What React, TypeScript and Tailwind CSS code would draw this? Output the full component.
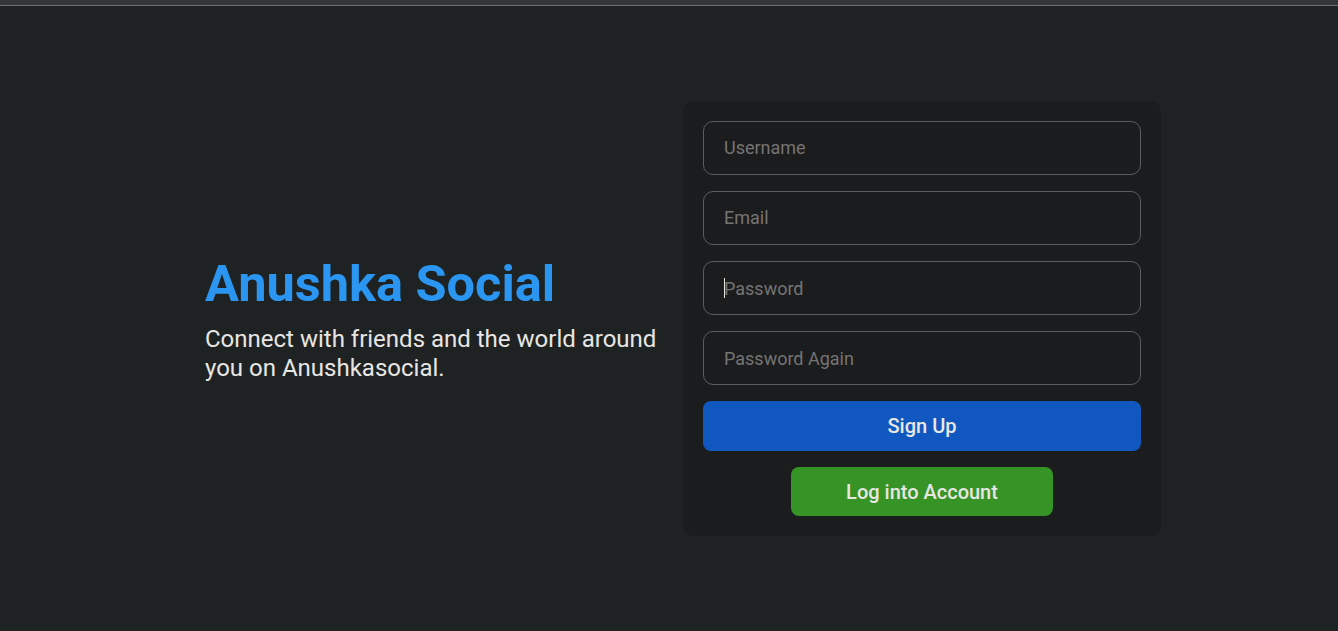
import React from "react";

export default function App() {
  const inputCls =
    "h-[54px] w-full rounded-[10px] border border-[#5a5e61] bg-[#1b1c1e] pl-[20px] text-[18px] text-[#e8e6e3] placeholder:text-[#757473] outline-none";
  return (
    <div className="flex h-[631px] w-full flex-col bg-[#1f2223]" style={{ fontFamily: "Roboto, 'Noto Sans', sans-serif" }}>
      <div className="h-[5px] w-full bg-[#35363a]" />
      <div className="h-px w-full bg-[#6b6e72]" />
      <div className="flex flex-1 items-center pl-[205px]">
        <div className="flex w-[478px] flex-col">
          <h1 className="text-[50.5px] font-bold leading-[58px] text-[#2b96f1]">Anushka Social</h1>
          <p className="mt-[12px] w-[465px] text-[24px] leading-[29px] text-[#e8e6e3]">
            Connect with friends and the world around you on Anushkasocial.
          </p>
        </div>
        <div className="flex w-[478px] flex-col items-center gap-[16.2px] rounded-[10px] bg-[#1b1c1e] p-[20px]">
          <input className={inputCls} placeholder="Username" />
          <input className={inputCls} placeholder="Email" />
          <div className="relative w-full">
            <input className={inputCls} placeholder="Password" type="password" />
            <div className="absolute left-[21px] top-[17px] h-[20px] w-px bg-[#e8e6e3]" />
          </div>
          <input className={inputCls} placeholder="Password Again" type="password" />
          <button className="h-[49.33px] w-full rounded-[8px] bg-[#1058bf] text-[20px] font-medium text-[#e8e6e3]">
            Sign Up
          </button>
          <button className="h-[49.33px] w-[262px] rounded-[8px] bg-[#369325] text-[20px] font-medium text-[#e8e6e3]">
            Log into Account
          </button>
        </div>
      </div>
    </div>
  );
}
